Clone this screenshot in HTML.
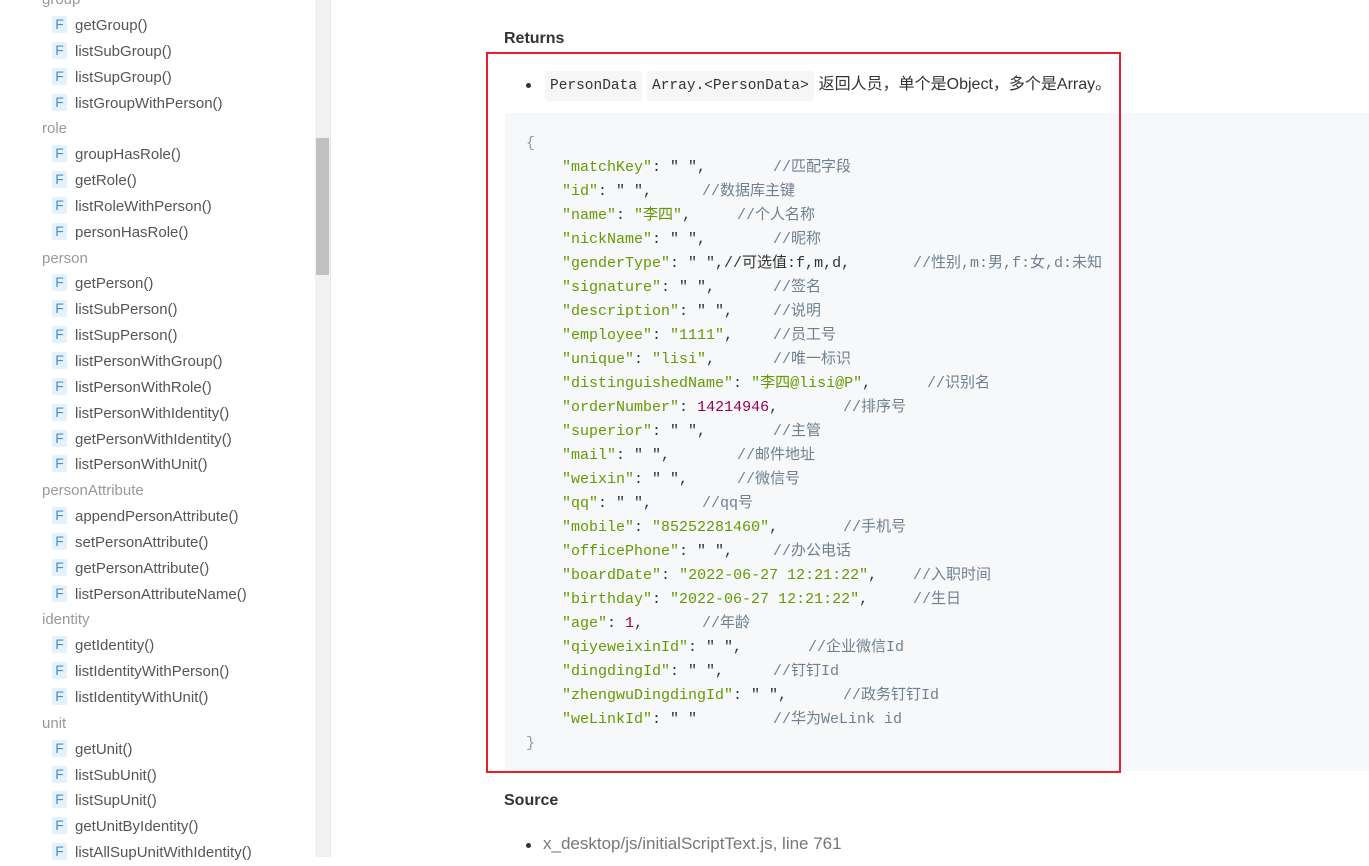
<!DOCTYPE html>
<html><head><meta charset="utf-8"><style>
*{margin:0;padding:0;box-sizing:border-box}
body{width:1369px;height:857px;overflow:hidden;background:#fff;font-family:"Liberation Sans","Noto Sans CJK SC",sans-serif;color:#333;position:relative}
#side{position:absolute;left:0;top:0;width:315px;height:857px;background:#fff}
#track{position:absolute;left:315px;top:0;width:15px;height:857px;background:#f1f1f1}
#thumb{position:absolute;left:316px;top:138px;width:13px;height:137px;background:#c1c1c1}
#bd{position:absolute;left:330px;top:0;width:1px;height:857px;background:#e6e6e6}
.r{position:absolute;left:0;height:26px;line-height:26px;font-size:15px;white-space:nowrap}
.c{left:42px;color:#999}
.f{left:52px;color:#555}
.f b{display:inline-block;width:15px;height:17px;line-height:17px;background:#e3f2fd;color:#4e8fc4;font-weight:normal;text-align:center;font-size:14px;border-radius:2px;margin-right:8px;vertical-align:1px}
h4{position:absolute;left:504px;font-size:16px;font-weight:bold;color:#333}
#red{position:absolute;left:486px;top:52px;width:635px;height:721px;border:2px solid #e5202e}
#code{position:absolute;left:505px;top:113px;width:864px;height:658px;background:#f6f8fa}
.l{position:absolute;left:526px;height:24px;line-height:24px;font-family:"Liberation Mono","Noto Sans CJK SC",monospace;font-size:15px;white-space:pre;color:#333}
.k{color:#690}.n{color:#905}.p{color:#999}
.cm{position:absolute;color:#708090;top:0}
.chip{display:inline-block;background:#f6f6f6;font-family:"Liberation Mono",monospace;font-size:14.5px;padding:0 5px;line-height:30px;height:30px;border-radius:3px;margin-right:5px}
.dot{position:absolute;left:526px;width:5px;height:5px;border-radius:50%;background:#333}
</style></head><body>
<div id="side" style="top:2px">
<div class="r c" style="top:-15px">group</div>
<div class="r f" style="top:11px"><b>F</b>getGroup()</div>
<div class="r f" style="top:37px"><b>F</b>listSubGroup()</div>
<div class="r f" style="top:63px"><b>F</b>listSupGroup()</div>
<div class="r f" style="top:89px"><b>F</b>listGroupWithPerson()</div>
<div class="r c" style="top:114px">role</div>
<div class="r f" style="top:140px"><b>F</b>groupHasRole()</div>
<div class="r f" style="top:166px"><b>F</b>getRole()</div>
<div class="r f" style="top:192px"><b>F</b>listRoleWithPerson()</div>
<div class="r f" style="top:218px"><b>F</b>personHasRole()</div>
<div class="r c" style="top:244px">person</div>
<div class="r f" style="top:269px"><b>F</b>getPerson()</div>
<div class="r f" style="top:295px"><b>F</b>listSubPerson()</div>
<div class="r f" style="top:321px"><b>F</b>listSupPerson()</div>
<div class="r f" style="top:347px"><b>F</b>listPersonWithGroup()</div>
<div class="r f" style="top:373px"><b>F</b>listPersonWithRole()</div>
<div class="r f" style="top:399px"><b>F</b>listPersonWithIdentity()</div>
<div class="r f" style="top:425px"><b>F</b>getPersonWithIdentity()</div>
<div class="r f" style="top:450px"><b>F</b>listPersonWithUnit()</div>
<div class="r c" style="top:476px">personAttribute</div>
<div class="r f" style="top:502px"><b>F</b>appendPersonAttribute()</div>
<div class="r f" style="top:528px"><b>F</b>setPersonAttribute()</div>
<div class="r f" style="top:554px"><b>F</b>getPersonAttribute()</div>
<div class="r f" style="top:580px"><b>F</b>listPersonAttributeName()</div>
<div class="r c" style="top:605px">identity</div>
<div class="r f" style="top:631px"><b>F</b>getIdentity()</div>
<div class="r f" style="top:657px"><b>F</b>listIdentityWithPerson()</div>
<div class="r f" style="top:683px"><b>F</b>listIdentityWithUnit()</div>
<div class="r c" style="top:709px">unit</div>
<div class="r f" style="top:735px"><b>F</b>getUnit()</div>
<div class="r f" style="top:761px"><b>F</b>listSubUnit()</div>
<div class="r f" style="top:786px"><b>F</b>listSupUnit()</div>
<div class="r f" style="top:812px"><b>F</b>getUnitByIdentity()</div>
<div class="r f" style="top:838px"><b>F</b>listAllSupUnitWithIdentity()</div>
</div>
<div id="track"></div><div id="thumb"></div><div id="bd"></div>

<h4 style="top:30px">Returns</h4>
<div id="code"></div>
<div class="dot" style="top:83px"></div>
<div style="position:absolute;left:545px;top:70px;font-size:16px;white-space:nowrap;line-height:30px"><span class="chip">PersonData</span><span class="chip">Array.&lt;PersonData&gt;</span>返回人员，单个是Object，多个是Array。</div>

<div class="l p" style="top:132px">{</div>
<div class="l" style="top:156px">    <span class="k">"matchKey"</span>: " ",<span class="cm" style="left:247px">//匹配字段</span></div>
<div class="l" style="top:180px">    <span class="k">"id"</span>: " ",<span class="cm" style="left:176px">//数据库主键</span></div>
<div class="l" style="top:204px">    <span class="k">"name"</span>: <span class="k">"李四"</span>,<span class="cm" style="left:211px">//个人名称</span></div>
<div class="l" style="top:228px">    <span class="k">"nickName"</span>: " ",<span class="cm" style="left:247px">//昵称</span></div>
<div class="l" style="top:252px">    <span class="k">"genderType"</span>: " ",//可选值:f,m,d,<span class="cm" style="left:387px">//性别,m:男,f:女,d:未知</span></div>
<div class="l" style="top:276px">    <span class="k">"signature"</span>: " ",<span class="cm" style="left:247px">//签名</span></div>
<div class="l" style="top:300px">    <span class="k">"description"</span>: " ",<span class="cm" style="left:247px">//说明</span></div>
<div class="l" style="top:324px">    <span class="k">"employee"</span>: <span class="k">"1111"</span>,<span class="cm" style="left:247px">//员工号</span></div>
<div class="l" style="top:348px">    <span class="k">"unique"</span>: <span class="k">"lisi"</span>,<span class="cm" style="left:247px">//唯一标识</span></div>
<div class="l" style="top:372px">    <span class="k">"distinguishedName"</span>: <span class="k">"李四@lisi@P"</span>,<span class="cm" style="left:401px">//识别名</span></div>
<div class="l" style="top:396px">    <span class="k">"orderNumber"</span>: <span class="n">14214946</span>,<span class="cm" style="left:317px">//排序号</span></div>
<div class="l" style="top:420px">    <span class="k">"superior"</span>: " ",<span class="cm" style="left:247px">//主管</span></div>
<div class="l" style="top:444px">    <span class="k">"mail"</span>: " ",<span class="cm" style="left:211px">//邮件地址</span></div>
<div class="l" style="top:468px">    <span class="k">"weixin"</span>: " ",<span class="cm" style="left:211px">//微信号</span></div>
<div class="l" style="top:492px">    <span class="k">"qq"</span>: " ",<span class="cm" style="left:176px">//qq号</span></div>
<div class="l" style="top:516px">    <span class="k">"mobile"</span>: <span class="k">"85252281460"</span>,<span class="cm" style="left:317px">//手机号</span></div>
<div class="l" style="top:540px">    <span class="k">"officePhone"</span>: " ",<span class="cm" style="left:247px">//办公电话</span></div>
<div class="l" style="top:564px">    <span class="k">"boardDate"</span>: <span class="k">"2022-06-27 12:21:22"</span>,<span class="cm" style="left:387px">//入职时间</span></div>
<div class="l" style="top:588px">    <span class="k">"birthday"</span>: <span class="k">"2022-06-27 12:21:22"</span>,<span class="cm" style="left:387px">//生日</span></div>
<div class="l" style="top:612px">    <span class="k">"age"</span>: <span class="n">1</span>,<span class="cm" style="left:176px">//年龄</span></div>
<div class="l" style="top:636px">    <span class="k">"qiyeweixinId"</span>: " ",<span class="cm" style="left:282px">//企业微信Id</span></div>
<div class="l" style="top:660px">    <span class="k">"dingdingId"</span>: " ",<span class="cm" style="left:247px">//钉钉Id</span></div>
<div class="l" style="top:684px">    <span class="k">"zhengwuDingdingId"</span>: " ",<span class="cm" style="left:317px">//政务钉钉Id</span></div>
<div class="l" style="top:708px">    <span class="k">"weLinkId"</span>: " "<span class="cm" style="left:247px">//华为WeLink id</span></div>
<div class="l p" style="top:732px">}</div>

<div id="red"></div>
<h4 style="top:792px">Source</h4>
<div class="dot" style="top:843px"></div>
<div style="position:absolute;left:543px;top:834px;font-size:17px;color:#777;white-space:nowrap">x_desktop/js/initialScriptText.js, line 761</div>
</body></html>
